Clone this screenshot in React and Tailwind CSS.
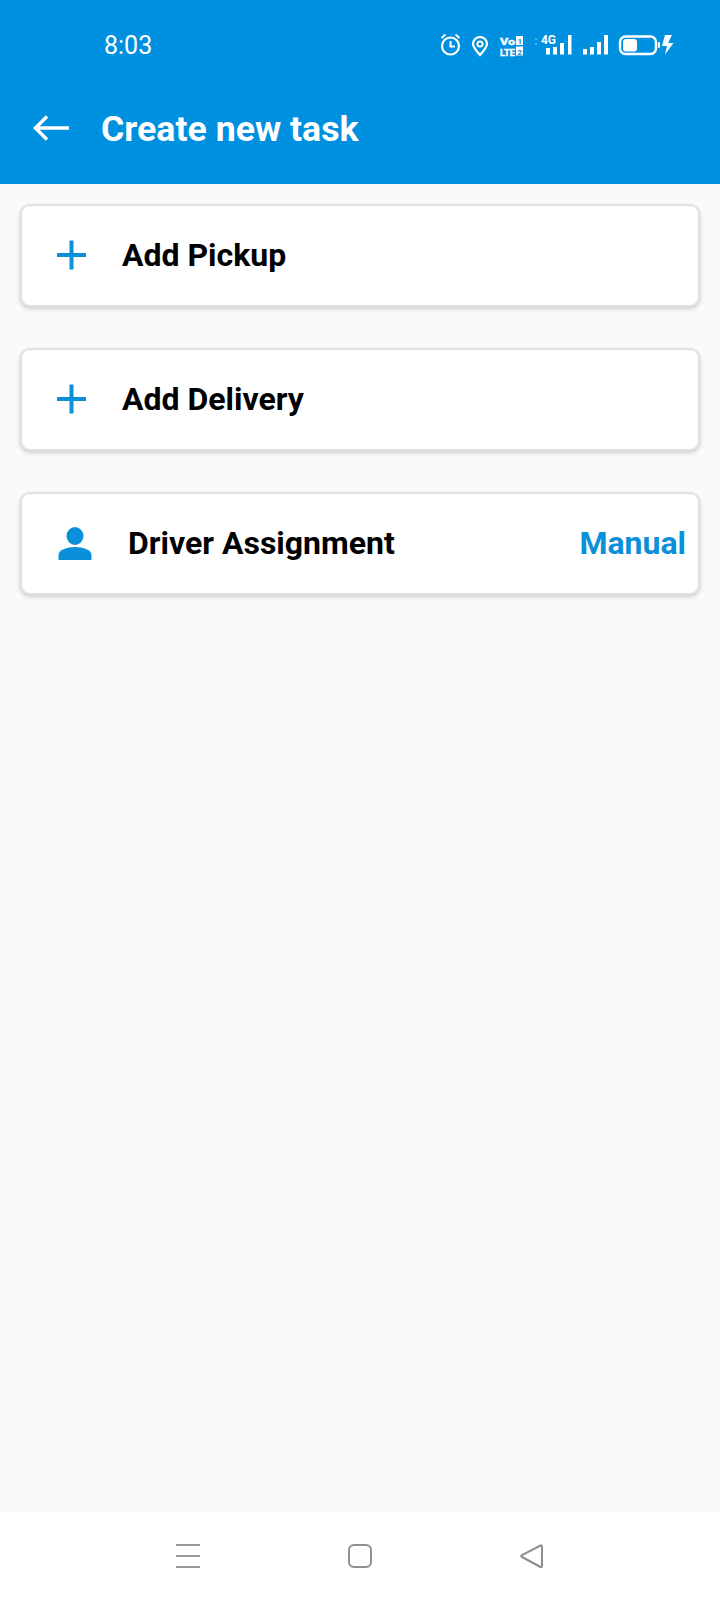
import React from 'react';

const PlusIcon = () => (
  <svg width="30" height="30" viewBox="0 0 30 30" className="text-[#0a8fd9]">
    <path d="M0 15h29M14.500 0.500v29" stroke="currentColor" strokeWidth="4" fill="none" />
  </svg>
);

const PersonIcon = () => (
  <svg width="34" height="33" viewBox="0 0 34 33" className="text-[#0a8fd9]">
    <ellipse cx="17" cy="9" rx="8.500" ry="9" fill="currentColor" />
    <path d="M0.500 33v-5c0-5 8-8 16.500-8s16.500 3 16.500 8v5z" fill="currentColor" />
  </svg>
);

const StatusIcons = () => (
  <svg width="240" height="30" viewBox="0 0 240 30" className="text-white" fill="none" stroke="currentColor">
    {/* alarm */}
    <circle cx="12.500" cy="16" r="8.500" strokeWidth="2.200" />
    <path d="M12.500 11v5.500h4.500M3.500 8l4-3.500M21.500 8l-4-3.500" strokeWidth="2" />
    {/* location pin */}
    <path d="M42 25c-4-4.500-7-8-7-11a7 7 0 0 1 14 0c0 3-3 6.500-7 11z" strokeWidth="2.200" />
    <circle cx="42" cy="14" r="2.600" strokeWidth="2" />
    {/* volte */}
    <g fontFamily="Roboto, sans-serif" fontWeight="700" fill="currentColor" stroke="none">
      <text x="62" y="14.500" fontSize="9.500" stroke="currentColor" strokeWidth="0.400" textLength="15" lengthAdjust="spacingAndGlyphs">Vo</text>
      <text x="62" y="25.500" fontSize="9.500" stroke="currentColor" strokeWidth="0.400" textLength="15" lengthAdjust="spacingAndGlyphs">LTE</text>
      <rect x="78" y="6" width="7" height="9" />
      <rect x="78" y="16.500" width="7" height="9" />
      <text x="79.500" y="14" fontSize="8" fill="#0090e0">1</text>
      <text x="79.500" y="24.500" fontSize="8" fill="#0090e0">2</text>
      {/* sim 1 signal */}
      <circle cx="98" cy="9" r="1" fill="#63bdf0" />
      <circle cx="98" cy="14" r="1" fill="#63bdf0" />
      <text x="103" y="14" fontSize="12.500" textLength="15" lengthAdjust="spacingAndGlyphs">4G</text>
      <rect x="108" y="18" width="4" height="6.500" />
      <rect x="115" y="17" width="4" height="7.500" />
      <rect x="122" y="13" width="4" height="11.500" />
      <rect x="130" y="5" width="3.500" height="19.500" />
      {/* sim 2 signal */}
      <rect x="145" y="19" width="4" height="5.500" />
      <rect x="152" y="17" width="4" height="7.500" />
      <rect x="159" y="12" width="4" height="12.500" />
      <rect x="166" y="5" width="4" height="19.500" />
    </g>
    {/* battery */}
    <rect x="182" y="6.500" width="36" height="17.500" rx="5.500" strokeWidth="2.400" />
    <rect x="185" y="9" width="14" height="12.500" rx="3" fill="currentColor" stroke="none" />
    <rect x="220" y="12" width="2" height="6" rx="1" fill="currentColor" stroke="none" />
    {/* charging bolt */}
    <path d="M227 5l-3 11h5l-2 8.500 8.500-11.500h-5.500l4-8z" fill="currentColor" stroke="none" />
  </svg>
);

const Card = ({ icon, label, right, gap }) => (
  <div className="h-[103px] mx-[20px] pb-[1px] flex items-center bg-white rounded-[10px] border-2 border-[#e0e0e0] shadow-[0_2px_4px_rgba(0,0,0,0.18)]">
    <div className={`flex items-center ${gap}`}>
      {icon}
    </div>
    <span className="text-[32px] leading-none font-bold text-black flex-1">{label}</span>
    {right && <span className="text-[32px] leading-none font-bold text-[#0a8fd9] pr-3">{right}</span>}
  </div>
);

const App = () => {
  return (
    <div className="w-[720px] h-[1600px] flex flex-col bg-[#fafafa] font-['Roboto',sans-serif]">
      {/* Status bar and title */}
      <div className="h-[184px] bg-[#0090e0] text-white shrink-0">
        <div className="h-[90px] flex items-center justify-between pl-[104px] pr-[42px]">
          <span className="text-[25px] font-normal pt-[2px]">8:03</span>
          <StatusIcons />
        </div>
        <div className="flex items-center pl-[33px] gap-[32px] h-[40px] mt-[20px]">
          <svg width="36" height="26" viewBox="0 0 36 26" fill="none" stroke="currentColor" strokeWidth="3.500" className="mb-[4px]">
            <path d="M36 13H3M14 1.500L2.500 13 14 24.500" />
          </svg>
          <span className="text-[35.7px] leading-none font-bold">Create new task</span>
        </div>
      </div>

      {/* Cards */}
      <div className="flex-1 flex flex-col gap-[41px] pt-[20px]">
        <Card icon={<PlusIcon />} label="Add Pickup" gap="pl-[35px] pr-[35px]" />
        <Card icon={<PlusIcon />} label="Add Delivery" gap="pl-[35px] pr-[35px]" />
        <Card icon={<PersonIcon />} label="Driver Assignment" right="Manual" gap="pl-[36px] pr-[36px]" />
      </div>

      {/* Bottom nav */}
      <div className="h-[88px] bg-white shrink-0 flex items-start pt-[32px] pl-[176px] gap-[148px]">
        <svg width="24" height="24" viewBox="0 0 24 24" stroke="#9a9a9a" strokeWidth="2" fill="none">
          <path d="M0 1h24M0 12h24M0 23h24" />
        </svg>
        <svg width="24" height="24" viewBox="0 0 24 24" stroke="#8f8f8f" strokeWidth="2" fill="none">
          <rect x="1" y="1" width="22" height="22" rx="5" />
        </svg>
        <svg width="24" height="24" viewBox="0 0 24 24" stroke="#8f8f8f" strokeWidth="2" fill="none">
          <path d="M22 2.500c0-1-.6-1.500-1.500-1L2 11c-1 .6-1 1.500 0 2l18.500 10c1 .5 1.500 0 1.500-1z" />
        </svg>
      </div>
    </div>
  );
};

export default App;
